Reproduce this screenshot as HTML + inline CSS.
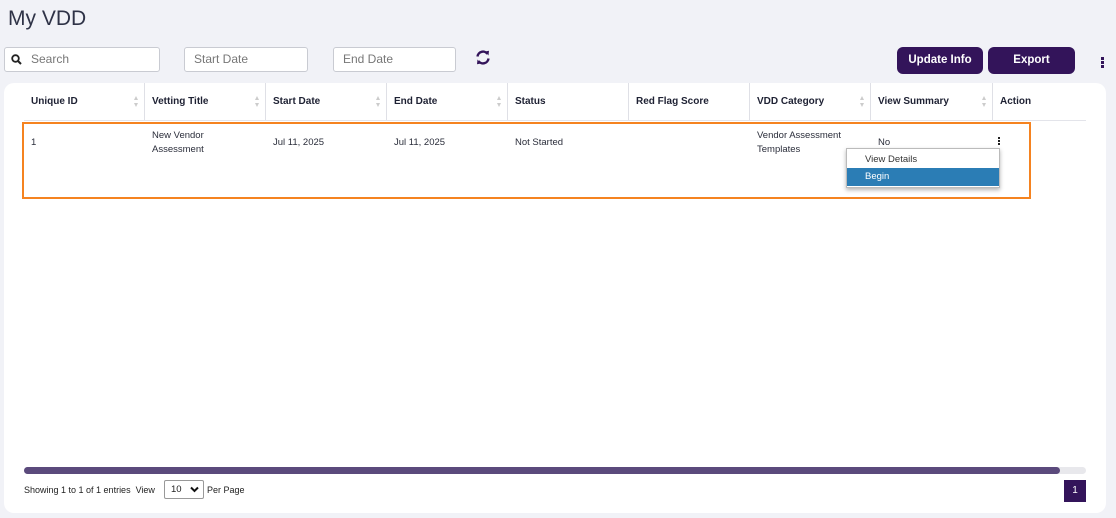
<!DOCTYPE html>
<html><head><style>
*{box-sizing:border-box;margin:0;padding:0}
body{width:1116px;height:518px;background:#f1f2f7;font-family:"Liberation Sans",sans-serif;position:relative;overflow:hidden;color:#222}
.abs{position:absolute}
h1{position:absolute;left:8px;top:7px;font-size:21px;font-weight:normal;color:#2f3347}
.inp{position:absolute;top:47px;height:25px;background:#fff;border:1px solid #c9cbd2;border-radius:3px;font-size:12px;color:#777;padding-left:9px;line-height:23px}
.btn{position:absolute;top:47px;height:27px;background:#33145a;color:#fff;font-weight:bold;font-size:11.5px;border-radius:6px;text-align:center;line-height:27px}
.card{position:absolute;left:4px;top:83px;width:1102px;height:430px;background:#fff;border-radius:10px}
.th{position:absolute;top:83px;height:37px;line-height:37px;font-size:10px;font-weight:bold;color:#1e2133;padding-left:7px;border-right:1px solid #dfe0e6}
.sort{position:absolute;right:5px;top:13px;width:5px;height:11px}
.sort:before,.sort:after{content:"";position:absolute;left:0;border-left:2.5px solid transparent;border-right:2.5px solid transparent}
.sort:before{top:0;border-bottom:4px solid #ccc}
.sort:after{bottom:0;border-top:4px solid #ccc}
.td{position:absolute;font-size:9.5px;color:#2a2d3a;line-height:14px}
</style></head><body>
<h1>My VDD</h1>
<div class="inp" style="left:4px;width:156px;padding-left:26px">Search</div>
<svg class="abs" style="left:11px;top:54px" width="11" height="11" viewBox="0 0 11 11"><circle cx="4.5" cy="4.5" r="3.3" fill="none" stroke="#222" stroke-width="1.8"/><line x1="7" y1="7" x2="10" y2="10" stroke="#222" stroke-width="2"/></svg>
<div class="inp" style="left:184px;width:124px">Start Date</div>
<div class="inp" style="left:333px;width:123px">End Date</div>
<svg class="abs" style="left:475px;top:50px" width="16" height="15" viewBox="0 0 16 15"><path d="M2.5 6.5A5.5 5.5 0 0 1 12.5 4" fill="none" stroke="#33145a" stroke-width="2.4"/><path d="M10 1.5L14 0.8L13.5 5.5Z" fill="#33145a"/><path d="M13.5 8.5A5.5 5.5 0 0 1 3.5 11" fill="none" stroke="#33145a" stroke-width="2.4"/><path d="M6 13.5L2 14.2L2.5 9.5Z" fill="#33145a"/></svg>
<div class="btn" style="left:897px;width:86px">Update Info</div>
<div class="btn" style="left:988px;width:87px">Export</div>
<div class="abs" style="left:1101px;top:57px;width:3px;height:11px;background:repeating-linear-gradient(#33145a 0 3px,transparent 3px 4px)"></div>
<div class="card"></div>
<div class="abs" style="left:24px;top:120px;width:1062px;height:1px;background:#e3e4ea"></div>
<div class="th" style="left:24px;width:121px">Unique ID<span class="sort"></span></div>
<div class="th" style="left:145px;width:121px">Vetting Title<span class="sort"></span></div>
<div class="th" style="left:266px;width:121px">Start Date<span class="sort"></span></div>
<div class="th" style="left:387px;width:121px">End Date<span class="sort"></span></div>
<div class="th" style="left:508px;width:121px">Status</div>
<div class="th" style="left:629px;width:121px">Red Flag Score</div>
<div class="th" style="left:750px;width:121px">VDD Category<span class="sort"></span></div>
<div class="th" style="left:871px;width:122px">View Summary<span class="sort"></span></div>
<div class="th" style="left:993px;width:93px;border:none">Action</div>
<div class="abs" style="left:22px;top:122px;width:1009px;height:77px;border:2px solid #f58320"></div>
<div class="td" style="left:31px;top:136px">1</div>
<div class="td" style="left:152px;top:129px">New Vendor<br>Assessment</div>
<div class="td" style="left:273px;top:136px">Jul 11, 2025</div>
<div class="td" style="left:394px;top:136px">Jul 11, 2025</div>
<div class="td" style="left:515px;top:136px">Not Started</div>
<div class="td" style="left:757px;top:129px">Vendor Assessment<br>Templates</div>
<div class="td" style="left:878px;top:136px">No</div>
<div class="abs" style="left:998px;top:137px;width:2px;height:8px;background:repeating-linear-gradient(#222 0 2px,transparent 2px 3px)"></div>
<div class="abs" style="left:846px;top:148px;width:154px;height:40px;background:#fff;border:1px solid #bbb;box-shadow:0 2px 4px rgba(0,0,0,.3)">
<div style="height:19px;line-height:21px;font-size:9.5px;padding-left:18px;color:#333">View Details</div>
<div style="height:18px;line-height:18px;font-size:9.5px;padding-left:18px;color:#fff;background:#2b7db5">Begin</div>
</div>
<div class="abs" style="left:24px;top:467px;width:1062px;height:7px;background:#e8e8ec;border-radius:4px"></div>
<div class="abs" style="left:24px;top:467px;width:1036px;height:7px;background:#5b4a7c;border-radius:4px"></div>
<div class="abs" style="left:24px;top:485px;font-size:9px;color:#222">Showing 1 to 1 of 1 entries&nbsp;&nbsp;View</div>
<div class="abs" style="left:164px;top:480px;width:40px;height:19px;border:1px solid #999;border-radius:2px;background:#fff;font-size:9.5px;padding-left:6px;line-height:17px">10<svg style="position:absolute;right:4px;top:5px" width="9" height="7" viewBox="0 0 9 7"><path d="M1 1.5L4.5 5L8 1.5" fill="none" stroke="#111" stroke-width="2"/></svg></div>
<div class="abs" style="left:207px;top:485px;font-size:9px;color:#222">Per Page</div>
<div class="abs" style="left:1064px;top:480px;width:22px;height:22px;background:#33145a;color:#fff;font-size:10px;text-align:center;line-height:22px">1</div>
</body></html>
